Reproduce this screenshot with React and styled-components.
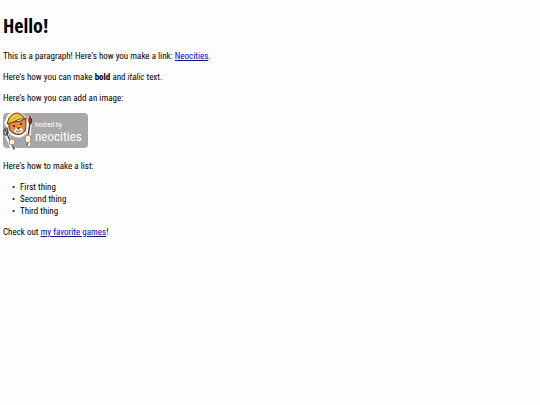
import React from "react";
import styled, { createGlobalStyle } from "styled-components";

const things = ["First thing", "Second thing", "Third thing"];

const Badge = () => {
  return (
    <BadgeSvg viewBox="0 0 85 36" role="img" aria-label="Hosted by Neocities">
      <rect x="0" y="0" width="85" height="35" rx="4" fill="#a8a8a8" />
      <g transform="translate(-3 0)">
        {/* white outline around the cat and its tools */}
        <path d="M12 34 L5 18 M28 31 L30 5" stroke="#fff" strokeWidth="4" fill="none" strokeLinecap="round" />
        <path d="M6 10 L9 3 Q15 -2 22 2 L26 7 L27 14 Q26 21 20 23 Q11 23 9 16 Z" fill="#fff" stroke="#fff" strokeWidth="3" />
        {/* fork */}
        <path d="M14 36 L7 21 M4 17 Q3 22 6 22 Q9 20 7 15 M5 16 L7 21" stroke="#4b4d51" strokeWidth="1.5" fill="none" strokeLinecap="round" />
        {/* brush */}
        <path d="M27 32 L30 9" stroke="#4b3430" strokeWidth="1.5" strokeLinecap="round" />
        <path d="M29 10 Q28 6 30 3 Q33 7 31 11 Z" fill="#a52b29" stroke="#6b201e" strokeWidth="1" />
        {/* head and helmet */}
        <path d="M9 10 Q8 18 13 20 Q20 24 25 18 Q26 15 26 5 L21 8 L14 9 Z" fill="#e58b3c" stroke="#51351e" strokeWidth="1" />
        <path d="M14 18 Q15 15 18 15 Q21 14 23 17 Q21 21 17 20 Q15 20 14 18 Z" fill="#fff5e6" />
        <path d="M7 11 L9 5 Q12 0 18 0 Q23 1 25 6 Q19 5 15 8 Q12 10 7 11 Z" fill="#e8b73c" stroke="#64491b" strokeWidth="1" />
        <path d="M11 6 Q13 3 18 2 M12 8 L21 4" stroke="#f8d968" strokeWidth="1" fill="none" />
        <circle cx="14" cy="13" r="1" fill="#2b211c" />
        <circle cx="21" cy="11" r="1" fill="#2b211c" />
        <path d="M17 15 L20 14 L19 17 Z" fill="#4b2a20" />
        <path d="M16 18 Q19 20 21 17" fill="none" stroke="#8d4930" strokeWidth="1" />
        {/* paws */}
        <ellipse cx="12" cy="29" rx="3" ry="3" fill="#fff4e2" stroke="#a58765" strokeWidth="1" />
        <ellipse cx="28" cy="26" rx="3" ry="4" fill="#fff4e2" stroke="#a58765" strokeWidth="1" />
      </g>
      <BadgeText x="32" y="14" $size={7}>hosted by</BadgeText>
      <BadgeText x="32" y="28" $size={13}>neocities</BadgeText>
    </BadgeSvg>
  );
};

const App = () => {
  return (
    <Page>
      <GlobalStyle />
      <Title>Hello!</Title>
      <Text>
        This is a paragraph! Here's how you make a link: <Link href="#neocities">Neocities</Link>.
      </Text>
      <Text>
        Here's how you can make <strong>bold</strong> and <em>italic</em> text.
      </Text>
      <Text>Here's how you can add an image:</Text>
      <Badge />
      <Text>Here's how to make a list:</Text>
      <List>
        {things.map((item) => (
          <Item key={item}>{item}</Item>
        ))}
      </List>
      <Text>
        Check out <Link href="#games">my favorite games</Link>!
      </Text>
    </Page>
  );
};

const GlobalStyle = createGlobalStyle`
  body {
    margin: 0;
    background: #fdfdfd;
    color: #000;
    font-family: "Roboto Condensed", "DejaVu Sans Condensed", sans-serif;
    font-size: 9px;
    line-height: 12px;
  }
`;

const Page = styled.main`
  display: flex;
  flex-direction: column;
  gap: 9px;
  padding: 14px 3px;
`;

const Title = styled.h1`
  margin: 0 0 4px;
  font-family: "Open Sans Condensed", "DejaVu Sans Condensed", sans-serif;
  font-size: 20px;
  line-height: 23px;
`;

const Text = styled.p`
  margin: 0;
`;

const Link = styled.a`
  color: #0000ee;
  text-decoration: underline;
`;

const List = styled.ul`
  margin: 0;
  padding-left: 9px;
  list-style: none;
`;

const Item = styled.li`
  display: flex;

  &::before {
    content: "•";
    width: 8px;
  }
`;

const BadgeSvg = styled.svg`
  display: block;
  width: 85px;
  height: 36px;
  margin-bottom: 2px;
  overflow: visible;
`;

const BadgeText = styled.text`
  fill: #fff;
  font-family: "Roboto Condensed", "DejaVu Sans Condensed", sans-serif;
  font-size: ${(props) => props.$size}px;
`;

export default App;
